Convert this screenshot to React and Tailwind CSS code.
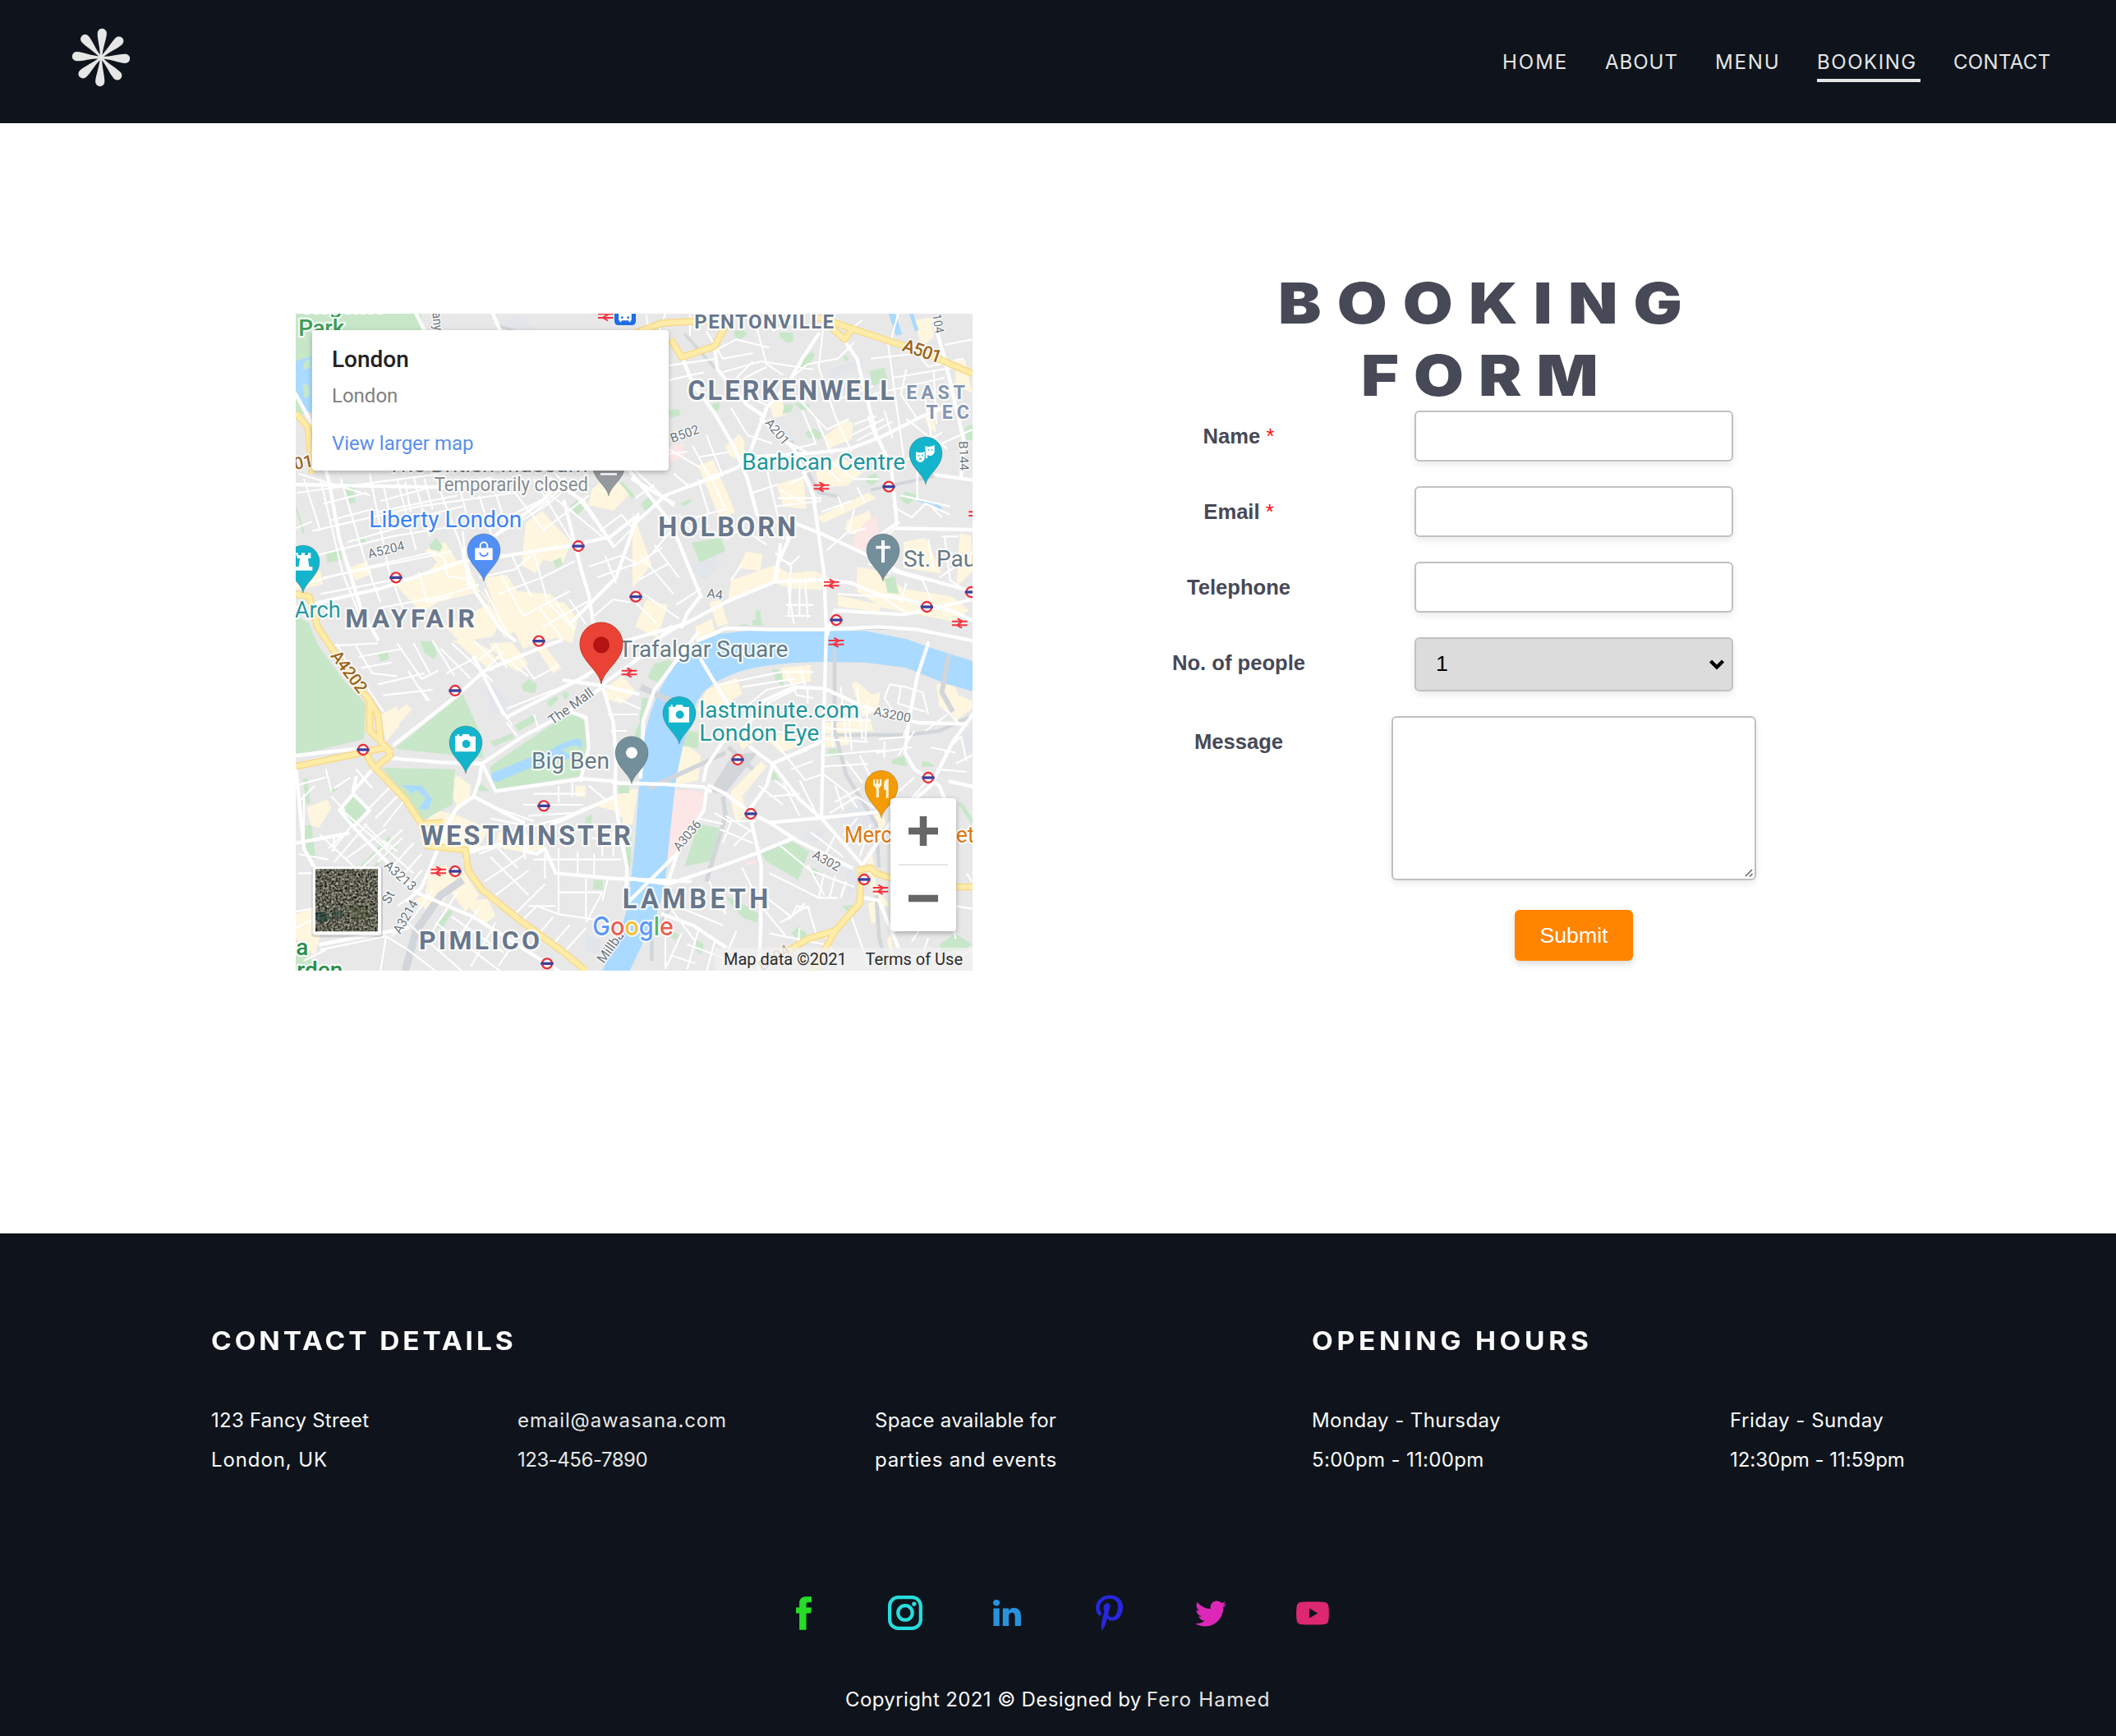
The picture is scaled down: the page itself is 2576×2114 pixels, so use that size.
import { FaPinterestP, FaTwitter, FaYoutube } from "react-icons/fa";

const PARKS = [
  "M30 36H485L505 110 30 420Z",
  "M30 1140L78 1165 110 1245 205 1375 285 1460 280 1590 30 1650Z",
  "M640 1425L700 1560 716 1660 390 1625Z",
  "M345 1695L612 1700 602 1830 560 1850 492 1890 430 1795Z",
  "M740 1690L960 1540 1050 1495 1090 1530 1100 1620 1070 1725 750 1775Z",
  "M205 655h38l5 70-18 5-22-35Z",
  "M520 880l22-25 25 30-10 20-35-8Z",
  "M140 905l55-12 5 42-55 12Z",
  "M258 858l20-10 12 22-20 10Z",
  "M970 938l28-10 8 25-25 12Z",
  "M1030 740l38-32 30 22-38 42Z",
  "M1475 872l108-18 17 48-95 42Z",
  "M1290 732l26-26 28 32-30 30Z",
  "M1435 730l35-17 5 10-30 17Z",
  "M2125 245l55-12 12 45-55 22Z",
  "M1920 170l5 20-25 45-35 5 25-45Z",
  "M1630 100l35-5 15 15-25 22-22-12Z",
  "M1795 105h50l3 30-20 8-28-20Z",
  "M1540 375l35-20 5 25-28 18Z",
  "M1390 390l38-6 8 22-35 12Z",
  "M1815 365l35 5-12 25-30 8Z",
  "M1850 360l60 10-12 18-25-4Z",
  "M1890 470l35-15 22 15 2 25-45-5Z",
  "M2120 630l30-12 12 25-28 20-22-12Z",
  "M2235 710l20-25 50 15-40 35Z",
  "M2180 1005l38-10 15 65-42-5Z",
  "M1710 1120h18v30l10 25h-40v-20h12Z",
  "M1640 1175l40-6-2 8Z",
  "M2475 450l30-12v60h-25Z",
  "M2030 190l12-5 8 20-12 4Z",
  "M1350 60l28-8-8 38-20-8Z",
  "M855 1395l25-25 32 20-8 32-40-6Z",
  "M945 1455l35-25 10 15-32 28ZM1000 1425l15-10 15 12-15 18Z",
  "M830 1540l70-40 15 20-72 42ZM740 1600l80-30 10 15-75 32Z",
  "M485 1232h40l22 45-12 20-35-22Z",
  "M330 1280l38-8 2 25-30 10Z",
  "M205 1850a40 38 0 1 0 78 0a40 38 0 1 0-78 0Z",
  "M55 1735h18l10 90-14 4Z",
  "M53 1905h35l15 120-30 5Z",
  "M265 2055l105-110 8 12-100 100ZM310 2060l85-90 6 10-85 85Z",
  "M540 2275l50-62 15 5-42 65Z",
  "M1118 2105h34l-2 35h-34Z",
  "M1090 1875l22-8-2 40-25-5Z",
  "M1230 1930h25v110l-10 40Z",
  "M1208 1760h40v28h-40Z",
  "M1270 1560l20-40v90l-25-20Z",
  "M1340 1315l55-15 18 15-60 70-38-20Z",
  "M1295 1440h22l-12 90-20-10Z",
  "M1770 1335l35 5 8 60-30-20Z",
  "M1448 1555l52 10 2 60-60-10Z",
  "M1423 1768l35 5-3 40-35-5Z",
  "M1760 1700l25 18 10 30-35-15Z",
  "M1975 1625h42v28h-42Z",
  "M2210 1665l42-15 10 40-55-10Z",
  "M2318 1670l25 5 22 15-48 2Z",
  "M2445 1820l20 5 40 60v25Z",
  "M1500 1900l75 15-25 120-100 20Z",
  "M1730 2005l115-40 60 35-40 105-120-70Z",
  "M1908 2070l12-10 20 12-12 22-18-8Z",
  "M1600 2160l60 30 60 40-5 30-50-15-45-50Z",
  "M1840 2300l22-25 35 25-10 40Z",
  "M2025 2200l40-5-20 25Z",
  "M1490 2320l30 20-8 40-20-20Z",
  "M1400 2290l30 15-10 20-20-10Z",
  "M2380 2340l60-40 60 40-20 15-90 15Z",
  "M30 2370l40-10 30 60-70 20Z",
  "M160 1775l20-15 5 12-18 12Z",
  "M690 1780l18-25 30 25Z",
  "M30 750l5-5 28 90-7 6Z",
  "M1215 655l10-5 45 55-12 6Z",
];

const COMMERCE = [
  "M380 1010l120-15 45-50 105-10 50 110 80 110-30 60-120 20-60-60 70-25 100-60-30-40-160 40-60 40Z",
  "M870 800l60-45 35 40 70 75-30 80-70-15-30 50-50-30Z",
  "M720 1000l80-10 40 60 120 10 80 80-60 20-60 70-80-40-50 30-30-100Z",
  "M830 1110l180-20 50 60-20 90-60-20-120 40-30-60Z",
  "M500 900l75-30 45 70-70 5Z",
  "M220 965l70-25 20 45-60 25Z",
  "M1110 680l70-60 70 75-60 60-90-20Z",
  "M30 990l90-15 10 50-100 20Z",
  "M1620 1010l160-55 50 30 90-10 70 30-40 40-110-5-60-20-170 60Z",
  "M1675 905l60 10-8 60-80-10Z",
  "M1600 520l50-45 20 30-5 70-50-20Z",
  "M1500 590l55-20 80 190-55 30Z",
  "M1785 660l100-30 10 120-85-10Z",
  "M1930 610l90-50 90 50-70 55-100 5Z",
  "M1960 485l80-60 25 10-5 60-90 35Z",
  "M1930 780l190-90 30 20-190 90Z",
  "M1755 355l50-8 15 60-45 10Z",
  "M2045 790l80-35 10 40-60 50-40-20Z",
  "M2250 870l80-15 60 130-140-20Z",
  "M2080 960l80 15 90 65 180 30 60 50-60 40-260-50-90-60Z",
  "M2010 1065l160 35-10 25-150-20Z",
  "M2440 210l35-5 25 120-60-25Z",
  "M2290 60l60-10 10 70-45 40Z",
  "M2325 410l35 10 10 50-30-20Z",
  "M2455 840l40 5 8 130-60 60Z",
  "M1260 760l70 190-70 90Z",
  "M1310 1080l80 20-40 120-80-40Z",
  "M1540 1090l40-10 30 90-40 10Z",
  "M1490 1180l60-30 15 60-70 40Z",
  "M620 1240l110 90 40-50-90-50h-80ZM740 1240l80-5 60 80-40 30-90-60Z",
  "M940 1250l60 80-30 20-60-90Z",
  "M1170 1395l55-35 50 60-60 40-60-20Z",
  "M575 1745l50-20 45 35-5 50-40 40-25-60Z",
  "M545 1850l80 20 110 50-50 90-160-30-20-90Z",
  "M520 2060l60-10 30 60-50 90-60-30Z",
  "M560 2100l80-30 60 90-50 60Z",
  "M640 2180l90-5 30 60-40 30Z",
  "M465 2180l30-20 60 30-30 40Z",
  "M70 1840l75-30 15 30-45 75-30-10Z",
  "M410 1480l25-18 20 20-65 70-22-20Z",
  "M340 1500l60-30 10 70-50 60Z",
  "M1110 1830l100-40 50 10-10 100-60-50Z",
  "M1220 1780l60-10-20 130-35 10Z",
  "M770 1930l120 10 60 50-80 15-110-20Z",
  "M1050 1760h40v40h-38Z",
  "M1440 1600l70 50-10 90-90 20Z",
  "M1530 1410l110-45 22 60-120 70-50-10Z",
  "M1800 1330l110-10 2 60-50 10-55-20Z",
  "M1590 1700l40-20-10 90-30-15ZM1620 1780l110-110 20 20-90 110 20 60-40 40-20-80Z",
  "M1640 1580l90-40 10 30-80 60ZM1740 1580l100-10 40 40-80 30Z",
  "M1960 1530l170-10 10 40-180 10ZM1960 1580l90-20v50l-90 10Z",
  "M2060 1390l15-12 60 50 30-10-10 70-55 20Z",
  "M2370 1390l60-10 30 70-20 60-60-40Z",
  "M2450 1430l50 20v30l-70 50Z",
  "M2140 1870l30-10 15 35-18 35Z",
  "M2115 2010l20-5 15 130 50 60-30 10-50-90Z",
  "M2120 2190l25-10 5 80-18 5ZM2190 2320l14-10 18 110-15-10Z",
  "M30 2230l60-20 40 60-30 110-70-60Z",
];

const POLISH = [
  "M1970 240l130-40v30l-120 45Z", "M1470 960l55-60 60 50-60 60Z", "M780 80l60-40 80 60-40 30Z",
  "M2010 1870l80-60 70 90-80 80Z", "M2450 1560l60-10v80l-40 20Z", "M720 1380l60 40 30 60-60 20Z",
  "M1090 2300l60 30-10 50-50-20Z", "M1890 1930l80-10-30 40-60 5Z", "M2040 2050l60 60-50 60Z",
];

const MINOR = [
  // north-west grid
  "M40 620L300 700M35 690L640 610 1000 560M90 830L480 740 830 690M60 930L380 850 620 810M30 1030L300 960 540 905",
  "M120 640L200 980M195 640L290 960M300 620L375 1000M400 640L470 900M460 630L520 850M560 690L640 900 690 1060",
  "M130 730L290 690M160 790L310 750M220 870L470 800M340 720L600 650M330 760L620 700M350 810L640 740",
  "M350 660l25 120M430 650l20 110M500 640l30 110M620 640l40 150M700 700l50 160M760 690l40 130",
  "M60 640l60 190M30 820l60-25M200 980l60 150M290 960l50 130M130 1000L600 905M120 1060L380 1010",
  "M380 1000l40 110M480 980l30 110 90-20M520 905l50 20 15 70 70 10M340 1110L560 1070 700 1025M640 830l20 200",
  "M740 860L940 740 1000 690M760 800l180-90M830 690l110 140M900 640l140 230M960 600l100 110 130 170",
  "M1040 640l-150 130M1100 700l-170 130M1150 850l-110-90-90-70M1190 890l70-70-40-50-80 60",
  "M720 1040l90 180M780 990l80 150M820 920l70 150M900 910l50 180 90 90M700 1000l130-30 60-50M770 1060l160-60 120-60",
  "M860 1140l170-90M920 1110l80 110M980 1090l70 100M1030 1080l60 90M1110 1080l-180 100M1120 1140l70-60 60 10",
  "M1240 600l-90 90M1100 960l120-40 60 30M1130 1000l140-50M1160 920l40 100",
  // north-east grid
  "M1240 110l110-30M1310 40l10 60M1380 36l-40 120M1290 240L1570 200M1300 300l220-50M1590 250l140-40 190 30",
  "M1470 36v80M1530 100l60 100 110-20M1560 170l80-40 120 30M1700 40l50 180 60 40M1770 100l100-40M1640 270l60-60",
  "M1750 230l-80 40-10 60 90 40M1620 380l60 100 90 30M1840 270l60-50 110-20 60-60M1960 60l-20 170 60 180 60 130",
  "M1880 390l50 120-80 20M1760 420l60 80 90 50M1930 420l60 130M1870 350l100 110 80-40M2010 350L2140 300",
  "M2060 90l40-30M2140 330L2400 270M2130 200l180-20M2230 36l-30 110 90 20M2290 170l50 60 130-30M2400 150l100-20",
  "M2190 120l60 440M2260 240l-20 90 60 90M2360 240l10 200M2210 270l240-40M2260 420l100 80M2330 350l20 130 60 50",
  "M2070 440l80-30M2060 480l120-60M2080 500l130-70M2120 410l30 90M2180 390l30 100M2260 570l240-110M2290 530l100-60",
  "M1290 470l220 130M1260 520l90 20M1300 560l160-20M1480 520l60 110 70-20M1500 560l120-20M1530 480l60 150",
  "M1260 600l150 140M1340 660l-70 50M1410 620l60 50 110-40M1500 640l40 130M1550 640l50 110-110 30M1430 770l50 60 60-20",
  "M1700 690l90-30M1750 600l60 260M1790 710h160M1780 740l170-20M1800 680l90 50M1830 660l60-30M1900 640l30 80",
  "M1880 620l80-30 60 60M1960 560l110 80 90 0M2010 700l20 60M2080 670l30 60M1950 760l110-40",
  "M1970 900l80-70 20-80M2050 840l60-20M2210 740l70 40 50-50 90 40M2390 780l-40-40M2240 700l180 40M2300 600v110",
  "M2120 950L2320 1010M2220 820l-60 50 40 120M2340 860l20 110M2400 850l20 160 60 40M2390 850h60M2320 1010l30 70M2440 960l-60 40",
  "M1780 910l60 50-10 90 20 120M1840 1010l-10 130M1890 1000l10 150M1820 1100h100M1820 1140h90M1870 1010v130",
  "M1820 860l30-60M1790 930l50 20 30-30M1750 880l-90-60-60 40M1660 950l-40 60M2010 1060l160 10 90 60M2260 1020l-20 70",
  "M1290 920l120 140M1340 880l90 120M1260 960l110-70M1280 1010l110-60M1400 830l-100 120M1300 1060l130 90M1350 1170l-80-80M1420 1100l90-60",
  // south-west grid
  "M180 1240L240 1360M250 1250l60 100 90 10M150 1250l180-10M260 1290l160-30M270 1330l110-20M400 1240l90 130 60-30",
  "M460 1240l60 110M530 1230l80 130M330 1390l170-40M350 1430l180-20M440 1340l70 110M480 1400l40 50M290 1400l60 90",
  "M600 1240l150 140M680 1230l90 90M760 1240l40 90M560 1260l110 110M700 1300l60-50M730 1330l60-60M690 1290l-110 60",
  "M740 1340l60-40 80 60M850 1300l50 70 90-50M820 1540l-50-80M800 1480L1100 1360M840 1580l-40-50M900 1500l20 60",
  "M30 1760l110-30M60 1790L60 1950M140 1700l20 80M160 1800l50 50M100 1760l-60 60M170 1770l60-40M250 1700l60 70",
  "M290 1850l90-90M320 1880l90-90M350 1910l80-100M200 1850L460 2080M120 1940l190 180M150 1990l60-60M170 2000v-60",
  "M240 1900L160 2000M280 1900l90 90M290 1900l-120 140M350 1960l50 40M210 2030l150-110M260 2070l160-150M330 2040l90-90",
  "M40 2010l110 20M40 2080h50M30 2220l60-10M30 2280l100-50M380 2060l80-90M400 2110l90-100M440 2130l50-60M400 2200l60-40",
  "M530 2140L460 2240 380 2310M620 2150l-90 140M700 2210l-110 150M760 2260l-90 160M830 2330l-60 90M540 2260l240 180M480 2300l160 140M600 2240l190 130",
  "M360 2310L340 2436M360 2310l80 50 100 76M120 2360L360 2310M60 2400l80-40M440 2260l60 60",
  "M640 2030l60 100M700 2010l150-60 20 80M740 2020l140 140M780 2000l60 60M720 2110l150-100M760 2160l120-90M830 2230l110-110",
  "M650 2010l110-30 60 60M940 2010v90M900 2030h320M990 1990v240M1060 2000v90M1120 2010v80M880 2200h100M990 2150h160M990 2230l140 20",
  "M850 2260l60-60 80 30M920 2300l50-60M960 2350l70-80M1000 2380l90-100M1090 2100v140M1150 2150l-60 110M1170 2100l-20 80",
  "M900 1790h180M860 1830h220M880 1870l160-10M760 1840l140 50M740 1880l150 30 110-30M960 1900l130-60M990 1760v60M1040 1750v50",
  "M1100 1760l60 50M1110 1950l90 20M1150 1900v120M1190 1930v90M1200 1440l90 40M1170 1500h110M1180 1560h60",
  // south-east grid
  "M1560 1395L1800 1345 1920 1345M1660 1400l190-30M1820 1340l40 90 60 10M1870 1330l30 90M1900 1400v60M1750 1460l120-60",
  "M1640 1500l110-90 140-30M1680 1590l60-30 140 10M1960 1490h170M1960 1520h170M1960 1590l160 10M1960 1550l150 10M2020 1400l20 190M2080 1400l20 190",
  "M1990 1470v150M2050 1500l10 130M2120 1450l-10 150M1960 1650l220-20M1960 1690l160-10M1960 1720l90 70M2040 1670l60 80M2090 1650l60 120",
  "M2180 1440l20-50 60 10 60 20 20 80M2180 1440l40 60M2240 1400l-10 60 100 30M2160 1590l120-10M2150 1640l130-20M2290 1560l-60 90M2180 1600v60",
  "M2330 1560l80-60M2400 1480l60 60M2350 1620l90 20M2400 1640l60-60 20 90M2440 1680l60-30M2280 1500l-30 80M2370 1700l110 10",
  "M2000 1820l90-50M1980 1860l100-60M2040 1780l40 60M2000 1760l30 90M2080 1800l60 40M2210 1800l80-70M2250 1840l80-90M2240 1900l20-80",
  "M1780 1600l110 140 60-20M1820 1660l80-30M1840 1700l80-30M1870 1740l60 120M1780 1740l70 60M1760 1800l110-10M1720 1760l90 70M1810 1750l60 120",
  "M1600 1870l100 60M1620 1890l-30 80M1580 1920l120 50M1690 1920l-60 60M1560 1860l50 30 100 0M1500 1880l90 20",
  "M2000 1940l-50 100M2030 1900l60 80M2080 1880l-50 60M2130 1900l-40 120M1910 1930l120 90M1800 1980l110 90 160 60M1760 2080l180 90 70 0",
  "M1900 2050l60 110M1960 2080l-20 90M2000 2090l-20 80M2040 2110l-20 60M1750 2170l90 70 20-40 50 10M1730 2200l90 110M1830 2250l60-60",
  "M1400 2210l90 120M1420 2200l170 70M1380 2240v190M1440 2300l-60 130M1500 2290l-40 140M1560 2330l-30 110M1640 2290l-60 140M1460 2340l240 90M1400 2380l90 30",
  "M1540 2110l60 120M1660 2060l40 80 60 70M1800 2260l100-60 30 100M1760 2300l200 40M1870 2280l-10 130M1960 2300l60 130M2060 2240l60 170",
  "M2210 2300l60-40 90 20M2280 2330l60-90M2440 2200l60 10M2260 2380l160 20 80-40M2300 2436l40-120M2430 2260l10 60M2480 2080l20 30",
];

const MAJOR = [
  "M30 330L80 420 150 640 190 860 270 1120 330 1225",
  "M30 660L560 670 740 640M30 1110L340 1040 640 940 800 920 1050 880 1180 850 1270 780",
  "M500 97L470 36M750 36l30 70M640 900L665 1020 780 1190 830 1230",
  "M740 860L930 720 1010 640",
  "M1010 720L1075 980 1100 1060 1120 1190M960 640L1080 720 1190 885",
  "M1040 1160L1120 1080 1200 1000 1280 770",
  "M1260 810L1380 700 1640 600 1700 560 1920 545 2050 530 2160 490 2320 410 2420 370",
  "M1250 610L1400 800 1510 1070",
  "M1260 640l150 90",
  "M1430 170L1480 290 1560 400 1630 520 1680 640 1715 770",
  "M1560 160l10 80 110 130 60 40",
  "M1940 110L1880 200 1830 290 1750 380 1690 540",
  "M2030 130L2080 200 2150 480 2205 590 2225 800",
  "M1730 420L1850 530 1920 700 1960 990",
  "M1850 800L1950 840 2080 900 2240 980 2500 1050",
  "M2225 820L2500 825M2140 860l90-60",
  "M2360 60L2400 200 2470 500 2460 630M2370 625l140 20",
  "M1240 1230L1450 1170 1600 1090 1780 1015 1960 1008 2060 1020 2150 1060 2260 1080 2420 1120 2510 1160",
  "M1510 1065L1460 1130 1440 1180M1440 1170L1340 1230",
  "M1500 1230L1600 1185 1760 1190 1960 1190 2160 1180 2300 1190 2500 1230",
  "M1960 1000L1968 1190 1962 1400 1955 1660 1950 1870",
  "M2005 1120L2250 1135 2330 1120 2500 1080M1970 1210l30-90",
  "M1800 880L1785 1000M1840 840l-50 110-10 55",
  "M390 1610L620 1430 720 1340 940 1250 1000 1230",
  "M800 1510L1050 1380 1120 1340",
  "M680 1290L790 1500",
  "M710 1680L860 1580 1010 1500 1150 1400",
  "M1030 1490l60 20 10 110-30 120",
  "M380 1660L560 1675 710 1680M30 1650l230-25",
  "M710 1680L700 1740 680 1800 620 1840 590 1890 550 1990 490 2130 440 2180",
  "M716 1690L760 1780 1080 1735 1200 1745",
  "M680 1800L860 1895",
  "M1150 1395L1190 1530 1200 1660 1195 1780 1215 1940 1240 2060 1235 2180",
  "M1150 1390L1290 1290 1400 1180M1010 1375l140 20 130 30",
  "M1195 1800L970 1900",
  "M1190 1750L1380 1755 1520 1765 1545 1780",
  "M250 1730L240 1780 320 1690M240 1790L190 1850 240 1910 300 1850Z",
  "M30 1970L220 1935",
  "M240 1910L470 2150 680 2240 900 2380 990 2436",
  "M30 1690L60 1990 110 2080",
  "M640 2000L860 1960M860 1890l10 110 40 10 30-20 40 90 220 20 270 10",
  "M120 2340L440 2280",
  "M1290 1730L1300 1520 1340 1410 1430 1290 1500 1200",
  "M1510 1300L1570 1400 1620 1480",
  "M1520 1740L1530 1690 1590 1600 1680 1540 1740 1450 1850 1400 1960 1405 2100 1470 2300 1530 2480 1535",
  "M1540 1760L1600 1790 1690 1860 1760 1895 1860 1960 2060 2060",
  "M1530 1780L1520 1850 1430 1990 1390 2110",
  "M1690 1620L1770 1680 1870 1810 1960 1890 2100 2050",
  "M1770 1680L1960 1595",
  "M1770 1690L1750 1760 1685 1850 1730 2050 1728 2300 1720 2430",
  "M1760 1895L1950 1878 2170 1855",
  "M1390 2120L1540 2070 1720 2005 1850 1950",
  "M1370 2230L1480 2270 1600 2350",
  "M2340 1240L2300 1360 2270 1520 2255 1640 2290 1700 2380 1760 2430 1880",
  "M2510 1490L2430 1600 2350 1760 2220 1870 2100 2050",
  "M2110 2170L2160 2180 2230 2350",
  "M2420 1745l90 20",
  "M1255 2100L1390 2120M1240 2190L1420 2010",
];

const HIGHWAYS = [
  "M30 400L75 450 90 620",
  "M1260 110L1370 70 1560 60",
  "M1400 130L1440 195 1560 155 1600 80",
  "M1940 50L2060 90 2330 180 2502 255M2060 95L2035 130 1985 85",
  "M30 1060L80 1070 110 1180 150 1240 230 1360 300 1450 330 1500 340 1600 380 1640",
  "M300 1450L300 1560 330 1590",
  "M30 1690L270 1640 360 1620 375 1650 320 1695 430 1810 490 1900 570 1895",
  "M285 1640L320 1700M490 1900l20 80 140 15L660 2070 710 2140 860 2260 1010 2370 1090 2436",
  "M2080 2070L2130 2060 2150 2080 2210 2100M2095 2080L2090 2190 2000 2290 1900 2320 1820 2370",
  "M2000 2290L1920 2436M2440 2130h70",
];

const UNDERGROUND = [
  [396, 1000], [1062, 885], [1272, 1070], [918, 1232], [2196, 668], [2497, 1053], [2335, 1107], [2004, 1155],
  [612, 1413], [276, 1629], [936, 1834], [612, 2073], [948, 2410], [1644, 1665], [1692, 1863], [2340, 1731], [2106, 2103],
];

const RAIL = [
  [1162, 44], [1950, 669], [1987, 1023], [2455, 1167], [2004, 1237], [2516, 767], [1248, 1347], [551, 2073], [2166, 2140],
];

const DISTRICTS = [
  ["MAYFAIR", 211, 1183, 473, 96], ["CLERKENWELL", 1462, 352, 755, 98], ["HOLBORN", 1354, 850, 503, 98],
  ["PENTONVILLE", 1486, 91, 509, 72], ["WESTMINSTER", 485, 1977, 769, 98], ["PIMLICO", 480, 2359, 441, 96],
  ["LAMBETH", 1223, 2207, 533, 98],
];

const PLACES = [
  ["Liberty London", 298, 815, 558, 84, "#3b83f1"], ["Temporarily closed", 536, 683, 562, 72, "#868c91"],
  ["The British Museum", 365, 616, 732, 80, "#7b8187"], ["Arch", 26, 1145, 168, 82, "#2a9a9f"],
  ["Barbican Centre", 1660, 605, 596, 84, "#22969b"], ["St. Paul's", 2250, 960, 340, 84, "#647a87"],
  ["Big Ben", 891, 1697, 285, 84, "#647a87"], ["Trafalgar Square", 1210, 1290, 618, 84, "#647a87"],
  ["lastminute.com", 1504, 1512, 584, 84, "#22969b"], ["London Eye", 1504, 1596, 438, 84, "#22969b"],
  ["Merc", 2034, 1968, 174, 84, "#dd7a10"], ["et", 2441, 1968, 68, 84, "#dd7a10"],
];

const ROAD_NAMES = [
  ["A5204", 298, 930, -14, 46, 136], ["B502", 1405, 508, -20, 46, 108], ["A201", 1742, 436, 50, 46, 108],
  ["B144", 2452, 502, 88, 46, 108], ["A4", 1530, 1072, 8, 46, 58], ["The Mall", 968, 1540, -36, 50, 190],
  ["A3213", 350, 2055, 42, 48, 138], ["A3214", 412, 2305, -60, 48, 132], ["St", 372, 2195, -62, 48, 44],
  ["A3200", 2138, 1503, 11, 46, 138], ["A3036", 1430, 2002, -50, 46, 130], ["A302", 1914, 2022, 29, 46, 108],
  ["Millba", 1155, 2412, -54, 50, 130], ["104", 2355, 40, 80, 44, 70], ["Albany", 522, -30, 84, 48, 130],
];

const pinPath = "M0 114C-6 78-60 50-60 0A60 60 0 1 1 60 0C60 50 6 78 0 114Z";

function Pin({ x, y, fill, children }) {
  return (
    <g transform={`translate(${x} ${y})`}>
      <path d={pinPath} fill={fill} stroke="#00000030" strokeWidth="3" />
      {children}
    </g>
  );
}

function Camera() {
  return (
    <g>
      <path d="M-38-22h22l6-8h20l6 8h20v56h-74Z" fill="#fff" />
      <circle cx="2" cy="6" r="15" fill="#14b5cc" />
      <path d="M-28-30v20M-38-20h20" stroke="#fff" strokeWidth="6" />
    </g>
  );
}

function LondonMap() {
  return (
    <svg viewBox="30 36 2472 2400" className="block h-[800px] w-[824px]" fontFamily="Roboto, sans-serif">
      <defs>
        <filter id="terrain" x="0" y="0" width="1" height="1" colorInterpolationFilters="sRGB">
          <feTurbulence type="fractalNoise" baseFrequency="0.12" numOctaves="5" seed="8" />
          <feColorMatrix values="1.1 0 0 0 -0.17  1.1 0 0 0 -0.17  1.05 0 0 0 -0.19  0 0 0 0 1" />
        </filter>
      </defs>
      <rect x="30" y="36" width="2472" height="2400" fill="#e8e8e8" />
      <g fill="#e2e6ea">{POLISH.map((d) => <path key={d} d={d} />)}</g>
      <g fill="#fef6de">{COMMERCE.map((d) => <path key={d} d={d} />)}</g>
      <g fill="#c8e7c9">{PARKS.map((d) => <path key={d} d={d} />)}</g>
      <g fill="#fce6e6">
        <path d="M1415 1770l110 15-15 70-75 130-55 60Z" />
        <path d="M1390 520l55-10 5 50-60 20ZM2120 790l35-15 5 60-50 65-50-10 15-50ZM1670 2045l40-15v20Z" />
      </g>
      <g fill="#aadaff">
        <path d="M1150 2436Q1200 2340 1235 2230Q1260 2080 1272 1930L1285 1750 1295 1630Q1315 1500 1360 1410Q1410 1310 1490 1240L1580 1205 1680 1195H2110L2260 1225 2360 1260 2502 1305V1415L2410 1390 2260 1330 2110 1310 1960 1308Q1710 1310 1610 1360Q1510 1400 1485 1480L1445 1610 1420 1730 1408 1830 1380 2100Q1360 2230 1310 2310L1250 2436Z" />
        <path d="M30 210L88 190V400Q40 380 30 300Z" />
        <path d="M745 1715L890 1655 900 1690 770 1745Q740 1750 745 1715ZM960 1630Q1020 1590 1065 1588Q1085 1605 1070 1625Q1060 1600 1000 1630Q1060 1660 1010 1665L900 1690 890 1655Z" />
        <path d="M415 1758L490 1760 528 1810 515 1848 480 1845 505 1805 470 1775 460 1790Z" />
        <path d="M2195 36h25l25 75-22 5ZM2270 36h15l20 60-12 6ZM2305 712l50 10-2 12-50-12ZM2362 722l32 25-15 2-22-14Z" />
      </g>
      <path d="M80 195l-20 20-5 25 30-5ZM55 290l22 8 5 40-20 5Z" fill="#c8e7c9" />
      <g fill="none" stroke="#d2d6da">
        <path d="M1290 1400L1400 1450" strokeWidth="22" />
        <path d="M1998 1260V1560L2040 1720 2150 1900 2160 2060" strokeWidth="14" />
        <path d="M2415 1280L2390 1420 2430 1490" strokeWidth="18" />
        <path d="M1990 1575H2260L2380 1560 2490 1510" strokeWidth="14" />
        <path d="M1590 1800L1600 1870 1530 2110M1610 1620L1700 1700M1320 1770L1600 1640" strokeWidth="16" />
        <path d="M1400 2200L1330 2310V2400M2150 2160l10 150 30 120" strokeWidth="14" />
        <path d="M640 2105L560 2160 470 2290 430 2436" strokeWidth="28" />
        <path d="M1545 1780l80-130 90-10-120 150Z" fill="#d2d6da" strokeWidth="4" />
        <path d="M1840 500L1940 690 2020 705M2130 680L2360 630M2080 1185H2220" strokeWidth="12" />
        <path d="M770 80L900 120M1450 110L1620 300" strokeWidth="10" />
      </g>
      <g fill="none" stroke="#fff" strokeWidth="6.5" strokeLinejoin="round">{MINOR.map((d) => <path key={d} d={d} />)}</g>
      <g fill="none" stroke="#fff" strokeWidth="13" strokeLinejoin="round" strokeLinecap="round">{MAJOR.map((d) => <path key={d} d={d} />)}</g>
      <g fill="none" stroke="#f9d98a" strokeWidth="26" strokeLinejoin="round">{HIGHWAYS.map((d) => <path key={d} d={d} />)}</g>
      <g fill="none" stroke="#feeda9" strokeWidth="17" strokeLinejoin="round">{HIGHWAYS.map((d) => <path key={d} d={d} />)}</g>

      {UNDERGROUND.map(([x, y]) => (
        <g key={`${x}-${y}`}>
          <circle cx={x} cy={y} r="18" fill="#fff" stroke="#e8303c" strokeWidth="7" />
          <rect x={x - 23} y={y - 5} width="46" height="10" fill="#3d3f9b" />
        </g>
      ))}
      {RAIL.map(([x, y]) => (
        <path key={`${x}-${y}`} transform={`translate(${x} ${y})`} d="M-28-7H28M-28 7H28M-8-17L10-7-10 7 8 17" fill="none" stroke="#f5323f" strokeWidth="6" />
      ))}

      <g stroke="#fff" strokeOpacity="0.85" strokeLinejoin="round" paintOrder="stroke">
        {ROAD_NAMES.map(([t, x, y, r, s, w]) => (
          <text key={t} transform={`translate(${x} ${y}) rotate(${r})`} fontSize={s} textLength={w} lengthAdjust="spacingAndGlyphs" fill="#6d757c" strokeWidth="8">{t}</text>
        ))}
        <g fill="#9b6420" strokeWidth="10" fontWeight="500">
          <text transform="translate(2242 170) rotate(19)" fontSize="66" textLength="146">A501</text>
          <text transform="translate(155 1286) rotate(53)" fontSize="62" textLength="176">A4202</text>
          <text transform="translate(28 607) rotate(-12)" fontSize="62">01</text>
          <text transform="translate(1735 2440) rotate(-34)" fontSize="54" opacity="0.5">B304</text>
        </g>
        <g fill="#68778c" strokeWidth="14" fontWeight="700">
          {DISTRICTS.map(([t, x, y, w, s]) => (
            <text key={t} x={x} y={y} fontSize={s} textLength={w}>{t}</text>
          ))}
        </g>
        <g fill="#8595af" strokeWidth="12" fontWeight="700" fontSize="70">
          <text x="2260" y="348" textLength="215">EAST</text>
          <text x="2332" y="420" textLength="158">TEC</text>
        </g>
        <g strokeWidth="13">
          {PLACES.map(([t, x, y, w, s, c]) => (
            <text key={t} x={x} y={y} fontSize={s} textLength={w} lengthAdjust="spacingAndGlyphs" fill={c}>{t}</text>
          ))}
        </g>
        <g fill="#3f9e58" strokeWidth="13" fontWeight="500" fontSize="84">
          <text x="60" y="34" textLength="300">Regent's</text>
          <text x="40" y="118" textLength="168">Park</text>
          <text x="-14" y="2380" fill="#2b8f4c">ea</text>
          <text x="34" y="2462" fill="#2b8f4c">rden</text>
        </g>
        <text x="1114" y="2308" fontSize="94" fontFamily="Inter, sans-serif" fontWeight="500" strokeWidth="12" textLength="296" lengthAdjust="spacingAndGlyphs">
          <tspan fill="#5b97f5">G</tspan><tspan fill="#ee5d50">o</tspan><tspan fill="#f5bf2c">o</tspan><tspan fill="#5b97f5">g</tspan><tspan fill="#55b36c">l</tspan><tspan fill="#ee5d50">e</tspan>
        </text>
      </g>

      <rect x="1194" y="14" width="78" height="64" rx="14" fill="#1d6fe3" />
      <path d="M1212 36h42v22h-42ZM1214 66l8-10M1252 66l-8-10" fill="#fff" stroke="#fff" strokeWidth="5" />
      <circle cx="1222" cy="50" r="4" fill="#1d6fe3" />
      <circle cx="1244" cy="50" r="4" fill="#1d6fe3" />

      <Pin x={57} y={942} fill="#14b5cc">
        <path d="M-28-32h10v8h12v-8h12v8h12v-8h10v20h-10l4 30h12v14h-62v-14h12l4-30h-8Z" fill="#fff" />
      </Pin>
      <Pin x={717} y={900} fill="#528ff5">
        <path d="M-32-8h64v44h-64Z" fill="#fff" />
        <path d="M-13-8v-8a13 13 0 0 1 26 0v8" fill="none" stroke="#fff" strokeWidth="6" />
        <path d="M-14 8a14 13 0 0 0 28 0" fill="none" stroke="#528ff5" strokeWidth="6" />
      </Pin>
      <Pin x={1173} y={588} fill="#93999e">
        <path d="M-30 30h60v8h-60Z" fill="#fff" />
      </Pin>
      <Pin x={2331} y={546} fill="#14b5cc">
        <path d="M-36-6q16 8 32 0v26q-16 26-32 0ZM-2-26q18 6 34-4v26q-10 20-26 10v12h-6Z" fill="#fff" />
        <path d="M-28 8h5M-15 8h5M8-12h5M20-12h5M-24 20h8" stroke="#14b5cc" strokeWidth="5" />
      </Pin>
      <Pin x={2175} y={900} fill="#738f9c">
        <path d="M-6-36h12v20h20v11h-20v50h-12v-50h-20v-11h20Z" fill="#fff" />
      </Pin>
      <Pin x={651} y={1602} fill="#14b5cc"><Camera /></Pin>
      <Pin x={1431} y={1495} fill="#14b5cc"><Camera /></Pin>
      <Pin x={1257} y={1640} fill="#738f9c"><circle r="21" fill="#fff" /></Pin>
      <Pin x={2169} y={1765} fill="#f39c06">
        <path d="M-30-28h7v16h5v-16h7v16h5v-16h7v22l-10 10v34h-10V4l-11-10ZM26-30v70h-9V10h-8v-22q2-16 17-18Z" fill="#fff3d6" />
      </Pin>
      <g transform="translate(1146 1242)">
        <path d="M0 146C-8 95-78 62-78 0A78 78 0 1 1 78 0C78 62 8 95 0 146Z" fill="#ea4335" stroke="#c5352a" strokeWidth="3" />
        <circle cy="4" r="30" fill="#b31412" />
      </g>

      <rect x="88" y="2054" width="260" height="260" rx="12" fill="#00000022" />
      <rect x="92" y="2055" width="250" height="250" rx="10" fill="#fff" />
      <svg x="102" y="2065" width="228" height="228">
        <rect width="228" height="228" filter="url(#terrain)" />
        <ellipse cx="24" cy="175" rx="26" ry="20" fill="#1d3f38" opacity="0.6" />
        <ellipse cx="82" cy="165" rx="22" ry="14" fill="#1d3f38" opacity="0.5" />
        <path d="M120 140l50-8 40 40-60 20Z" fill="#4d5a30" opacity="0.35" />
      </svg>
    </svg>
  );
}

function MapPanel() {
  return (
    <div className="relative mt-[232px] ml-[360px] h-[800px] w-[824px] shrink-0 overflow-hidden font-[Roboto,sans-serif]">
      <LondonMap />
      <div className="absolute top-5 left-5 flex h-[171px] w-[434px] flex-col rounded bg-white pl-6 shadow-[0_2px_6px_rgba(0,0,0,0.25)]">
        <p className="mt-5 text-[28px] leading-8 font-medium text-[#222]">London</p>
        <p className="mt-3 text-[24px] leading-8 text-[#7f7f83]">London</p>
        <p className="mt-[26px] text-[24px] leading-8 text-[#5a8eec]">View larger map</p>
      </div>
      <div className="absolute top-[590px] left-[724px] flex h-[162px] w-20 flex-col items-center rounded bg-white shadow-[0_2px_6px_rgba(0,0,0,0.3)]">
        <div className="flex h-[82px] w-[60px] items-center justify-center border-b-2 border-[#e6e6e6]">
          <svg viewBox="0 0 36 36" className="size-9"><path d="M18 0v36M0 18h36" stroke="#666" strokeWidth="8.5" /></svg>
        </div>
        <div className="flex h-20 w-[60px] items-center justify-center">
          <svg viewBox="0 0 36 36" className="size-9"><path d="M0 18h36" stroke="#666" strokeWidth="8.5" /></svg>
        </div>
      </div>
      <div className="absolute right-0 bottom-0 flex h-7 w-[314px] items-center bg-[#f2f2f2]/70 pr-3 pl-[11px] text-[20px] leading-7 text-[#2c2c2c]">
        <span className="w-[174px]">Map data ©2021</span>
        <span className="whitespace-nowrap">Terms of Use</span>
      </div>
    </div>
  );
}

function Logo() {
  return (
    <svg viewBox="-40 -40 80 80" className="mt-[30px] ml-[83px] size-20 fill-[#e6e6e6]">
      {[2.5, 47.5, 92.5, 138, 182.5, 228, 272.5, 319].map((a) => (
        <path key={a} transform={`rotate(${a})`} d="M-1.2 0C-1.4-12-5.6-22-5.6-29.6A5.6 5.6 0 0 1 5.6-29.6C5.6-22 1.4-12 1.2 0Z" />
      ))}
      <circle r="3.6" />
    </svg>
  );
}

function Header() {
  return (
    <header className="flex h-[150px] bg-[#0f141c] text-[#e6e6e6]">
      <Logo />
      <nav className="mt-[60px] ml-auto flex text-[24px] leading-8">
        <a className="w-[125px] tracking-[2px]">HOME</a>
        <a className="w-[134px] tracking-[1px]">ABOUT</a>
        <a className="w-[124px] tracking-[1.85px]">MENU</a>
        <a className="h-10 w-[126px] border-b-4 border-[#e6e6e6] tracking-[1.55px]">BOOKING</a>
        <a className="ml-10 w-[198px] tracking-[0.34px]">CONTACT</a>
      </nav>
    </header>
  );
}

const box = "rounded-md border-2 border-[#c1c1c1] bg-white shadow-[0_4px_8px_rgba(0,0,0,0.08)]";

function Row({ label, required, labelClass, children }) {
  return (
    <div className="grid grid-cols-[304px_512px]">
      <label className={`text-center text-[25.6px] leading-8 font-bold text-[#474957] ${labelClass}`}>
        {label}
        {required && <span className="font-normal text-[#ff1010]"> *</span>}
      </label>
      <div className="flex justify-center">{children}</div>
    </div>
  );
}

function BookingForm() {
  return (
    <section className="mt-[175px] ml-[172px] w-[816px] font-['Liberation_Sans',sans-serif]">
      <h1 className="flex h-[175px] flex-col items-start text-[69px] leading-[88px] font-black text-[#474957] font-[Inter,sans-serif]">
        <span className="ml-[200px] origin-left scale-x-[1.14] tracking-[16.8px]">BOOKING</span>
        <span className="ml-[301px] origin-left scale-x-[1.14] tracking-[15.8px]">FORM</span>
      </h1>
      <form className="flex flex-col gap-[30px]">
        <Row label="Name" required labelClass="pt-[15px]"><input className={`h-[62px] w-[388px] ${box}`} /></Row>
        <Row label="Email" required labelClass="pt-[15px]"><input className={`h-[62px] w-[388px] ${box}`} /></Row>
        <Row label="Telephone" labelClass="pt-[15px]"><input className={`h-[62px] w-[388px] ${box}`} /></Row>
        <Row label="No. of people" labelClass="pt-[15px]">
          <div className="flex h-[66px] w-[388px] items-center justify-between rounded-md border-2 border-[#c1c1c1] bg-[#dcdcdc] pr-2 pl-6 text-[26.67px] text-black shadow-[0_4px_8px_rgba(0,0,0,0.08)]">
            <span className="-mt-0.5">1</span>
            <svg viewBox="0 0 20 14" className="h-3.5 w-5"><path d="M2.5 3L10 10.5 17.5 3" fill="none" stroke="#000" strokeWidth="4.4" /></svg>
          </div>
        </Row>
        <Row label="Message" labelClass="pt-[15px]">
          <div className={`flex h-[200px] w-[444px] items-end justify-end p-0.5 ${box}`}>
            <svg viewBox="0 0 10 10" className="size-2.5"><path d="M1 9L9 1M6 9.5L9.5 6" stroke="#555" strokeWidth="1.3" /></svg>
          </div>
        </Row>
        <div className="mt-1.5 ml-[488px] flex h-[62px] w-36 items-center justify-center rounded-md bg-[#ff8400] text-[26.67px] text-white shadow-[0_4px_8px_rgba(0,0,0,0.14)]">
          Submit
        </div>
      </form>
    </section>
  );
}

function Socials() {
  return (
    <div className="mt-[138px] ml-[916px] flex h-12 w-[744px] *:flex *:w-[124px] *:items-center *:justify-center">
      <a>
        <svg viewBox="0 0 9.35 20" className="h-[41px] w-[19px] fill-[#27dd27]">
          <path d="M2.046 3.865v2.748H.032v3.36h2.014v9.986H6.18V9.974h2.775s.26-1.611.386-3.373H6.197V4.303c0-.343.45-.805.896-.805h2.254V0H6.283c-4.34 0-4.237 3.363-4.237 3.865z" />
        </svg>
      </a>
      <a>
        <svg viewBox="0 0 20 20" className="size-[42px] fill-[#27dddd]">
          <path d="M14.017 0h-8.07A5.954 5.954 0 0 0 0 5.948v8.07a5.954 5.954 0 0 0 5.948 5.947h8.07a5.954 5.954 0 0 0 5.947-5.948v-8.07A5.954 5.954 0 0 0 14.017 0zm3.94 14.017a3.94 3.94 0 0 1-3.94 3.94h-8.07a3.94 3.94 0 0 1-3.939-3.94v-8.07a3.94 3.94 0 0 1 3.94-3.939h8.07a3.94 3.94 0 0 1 3.939 3.94v8.07z" />
          <path d="M9.982 4.819A5.17 5.17 0 0 0 4.82 9.982a5.17 5.17 0 0 0 5.163 5.164 5.17 5.17 0 0 0 5.164-5.164A5.17 5.17 0 0 0 9.982 4.82zm0 8.319a3.155 3.155 0 1 1 0-6.31 3.155 3.155 0 0 1 0 6.31z" />
          <circle cx="15.156" cy="4.858" r="1.237" />
        </svg>
      </a>
      <a>
        <svg viewBox="0 0 20 19.2" className="w-[34px] fill-[#2794dd]">
          <path d="M19.959 11.719v7.379h-4.278v-6.885c0-1.73-.619-2.91-2.167-2.91-1.182 0-1.886.796-2.195 1.565-.113.275-.142.658-.142 1.043v7.187h-4.28s.058-11.66 0-12.869h4.28v1.824l-.028.042h.028v-.042c.568-.875 1.583-2.126 3.856-2.126 2.815 0 4.926 1.84 4.926 5.792zM2.421.026C.958.026 0 .986 0 2.249c0 1.235.93 2.224 2.365 2.224h.028c1.493 0 2.42-.989 2.42-2.224C4.787.986 3.887.026 2.422.026zM.254 19.098h4.278V6.229H.254v12.869z" />
        </svg>
      </a>
      <a><FaPinterestP className="h-[44px] w-[33px] text-[#2727dd]" /></a>
      <a><FaTwitter className="mt-0.5 size-[38px] text-[#dd27b8]" /></a>
      <a><FaYoutube className="h-[41px] w-[42px] text-[#dd2770]" /></a>
    </div>
  );
}

function Footer() {
  return (
    <footer className="h-[612px] bg-[#0f141c] pt-[111px] text-[24px] leading-[48px] text-[#fafafa]">
      <div className="grid grid-cols-[1340px_1fr] pl-[257px]">
        <div>
          <h2 className="origin-left scale-x-[1.08] text-[31px] leading-10 font-bold tracking-[3.6px]">CONTACT DETAILS</h2>
          <div className="mt-[53px] grid grid-cols-[373px_435px_1fr] *:flex *:flex-col">
            <div><span className="tracking-[0.25px]">123 Fancy Street</span><span className="tracking-[0.9px]">London, UK</span></div>
            <div className="text-[#e6e6e6]"><span className="tracking-[0.9px]">email@awasana.com</span><span className="tracking-[-0.48px]">123-456-7890</span></div>
            <div><span className="tracking-[0.26px]">Space available for</span><span className="tracking-[0.72px]">parties and events</span></div>
          </div>
        </div>
        <div>
          <h2 className="origin-left scale-x-[1.08] text-[31px] leading-10 font-bold tracking-[4.35px]">OPENING HOURS</h2>
          <div className="mt-[53px] grid grid-cols-[509px_1fr] *:flex *:flex-col">
            <div><span className="tracking-[0.41px]">Monday - Thursday</span><span className="tracking-[0.32px]">5:00pm - 11:00pm</span></div>
            <div><span className="tracking-[0.51px]">Friday - Sunday</span><span className="tracking-[-0.02px]">12:30pm - 11:59pm</span></div>
          </div>
        </div>
      </div>
      <Socials />
      <p className="mt-[66px] flex gap-1.5 pl-[1029px] leading-8">
        <span className="tracking-[0.39px]">Copyright 2021 © Designed by</span>
        <span className="tracking-[1.3px] text-[#e6e6e6]">Fero Hamed</span>
      </p>
    </footer>
  );
}

export default function App() {
  return (
    <div className="w-[2576px] bg-white font-[Inter,sans-serif]">
      <Header />
      <main className="flex h-[1352px]">
        <MapPanel />
        <BookingForm />
      </main>
      <Footer />
    </div>
  );
}
